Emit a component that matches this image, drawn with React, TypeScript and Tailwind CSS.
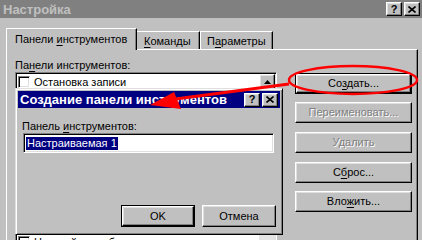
const raised =
  "border border-t-white border-l-white border-r-black border-b-black shadow-[inset_-1px_-1px_0_#808080,inset_1px_1px_0_#dfdfdf]";
const sunken =
  "border border-t-[#808080] border-l-[#808080] border-r-white border-b-white shadow-[inset_1px_1px_0_#000,inset_-1px_-1px_0_#dfdfdf]";

const U = ({ children }: { children: string }) => (
  <span className="underline underline-offset-[2px]">{children}</span>
);

const CaptionButtons = () => (
  <div className="flex gap-[2px]">
    <div
      className={`w-[16px] h-[14px] bg-[#c0c0c0] ${raised} flex items-center justify-center text-[11px] font-bold leading-none text-black`}
    >
      ?
    </div>
    <div
      className={`w-[16px] h-[14px] bg-[#c0c0c0] ${raised} flex items-center justify-center`}
    >
      <svg width="8" height="7" viewBox="0 0 8 7">
        <path d="M0.5 0.5 L7.5 6.5 M7.5 0.5 L0.5 6.5" stroke="black" strokeWidth="1.6" />
      </svg>
    </div>
  </div>
);

const SideButton = ({
  children,
  disabled,
  isDefault,
  className,
}: {
  children: React.ReactNode;
  disabled?: boolean;
  isDefault?: boolean;
  className?: string;
}) => (
  <div
    className={`h-[21px] w-[117px] ${isDefault ? "border border-black" : ""} ${className ?? ""}`}
  >
    <div
      className={`h-full w-full ${raised} flex items-center justify-center ${
        disabled ? "text-[#808080] [text-shadow:1px_1px_0_#fff]" : "text-black"
      }`}
    >
      <span>{children}</span>
    </div>
  </div>
);

const Row = ({ label }: { label: string }) => (
  <div className="h-[16px] flex items-center gap-[4px] pl-[1px] shrink-0">
    <div className={`w-[12px] h-[12px] bg-white ${sunken}`} />
    <span>{label}</span>
  </div>
);

export default function App() {
  return (
    <div className="relative w-[422px] h-[240px] overflow-hidden bg-[#c0c0c0] font-['Liberation_Sans',Arial,sans-serif] text-[11px] text-black">
      {/* title bar */}
      <div className="h-[18px] bg-[#808080] flex items-center justify-between pl-[3px] pr-[2px]">
        <span className="text-[13px] font-bold text-[#c0c0c0] leading-none">Настройка</span>
        <CaptionButtons />
      </div>

      <div className="pt-[10px] pl-[6px] pr-[4px]">
        {/* tabs */}
        <div className="flex items-end h-[21px]">
          <div className="relative z-10 h-[22px] -mb-[1px] w-[131px] bg-[#c0c0c0] border-t border-l border-white border-r border-r-black shadow-[inset_-1px_0_0_#808080] flex items-center pl-[8px] pb-[1px]">
            <span>
              Панели <U>и</U>нструментов
            </span>
          </div>
          <div className="h-[18px] w-[63px] border-t border-white border-r border-r-black shadow-[inset_-1px_0_0_#808080] flex items-center pl-[7px] pt-[2px]">
            <span>
              <U>К</U>оманды
            </span>
          </div>
          <div className="h-[18px] w-[73px] border-t border-l border-white border-r border-r-black shadow-[inset_-1px_0_0_#808080] flex items-center pl-[6px] pt-[2px]">
            <span>
              П<U>а</U>раметры
            </span>
          </div>
        </div>

        {/* panel */}
        <div className="h-[200px] border-t border-l border-white border-r border-r-black shadow-[inset_-1px_0_0_#808080] flex pl-[8px] gap-[18px]">
          <div className="pt-[8px] w-[262px]">
            <div className="h-[14px] leading-[14px]">
              Па<U>н</U>ели инструментов:
            </div>
            <div className={`h-[200px] bg-white ${sunken} p-[1px] flex`}>
              <div className="flex-1 flex flex-col">
                <Row label="Остановка записи" />
                {/* rows hidden behind the dialog */}
                <div className="h-[144px] shrink-0" />
                <Row label="Настройка изображения" />
              </div>
              <div className="w-[16px] flex flex-col bg-[#e4e4e4]">
                <div className={`h-[16px] bg-[#c0c0c0] ${raised} flex items-center justify-center`}>
                  <svg width="7" height="4" viewBox="0 0 7 4">
                    <path d="M3.5 0 L7 4 L0 4 Z" fill="black" />
                  </svg>
                </div>
              </div>
            </div>
          </div>

          <div className="pt-[23px] flex flex-col">
            <SideButton isDefault>
              Со<U>з</U>дать...
            </SideButton>
            <SideButton disabled className="mt-[8px]">
              Переименовать...
            </SideButton>
            <SideButton disabled className="mt-[9px]">
              Удалить
            </SideButton>
            <SideButton className="mt-[9px]">
              С<U>б</U>рос...
            </SideButton>
            <SideButton className="mt-[8px]">
              Вло<U>ж</U>ить...
            </SideButton>
          </div>
        </div>
      </div>

      {/* dialog: Создание панели инструментов */}
      <div className="absolute left-[15px] top-[88px] w-[268px] h-[147px] bg-[#c0c0c0] border border-t-[#dfdfdf] border-l-[#dfdfdf] border-r-black border-b-black shadow-[inset_1px_1px_0_#fff,inset_-1px_-1px_0_#808080] p-[2px]">
        <div className="h-[17px] bg-[#000080] flex items-center justify-between pl-[2px] pr-[2px]">
          <span className="text-[13px] font-bold text-white leading-none">Создание панели инструментов</span>
          <CaptionButtons />
        </div>
        <div className="pl-[4px] mt-[11px] h-[14px] leading-[14px]">
          Панель <U>и</U>нструментов:
        </div>
        <div className={`ml-[5px] w-[251px] h-[20px] bg-white ${sunken} flex items-center pl-[2px]`}>
          <span className="bg-[#000080] text-white leading-[13px] px-[1px]">Настраиваемая 1</span>
        </div>
        <div className="flex justify-end gap-[7px] pr-[4px] mt-[52px]">
          <div className="w-[74px] h-[22px] border border-black">
            <div className={`h-full w-full ${raised} flex items-center justify-center`}>OK</div>
          </div>
          <div className={`w-[74px] h-[22px] ${raised} flex items-center justify-center`}>Отмена</div>
        </div>
      </div>

      {/* red annotation */}
      <svg className="absolute inset-0 pointer-events-none" width="422" height="240" viewBox="0 0 422 240">
        <ellipse cx="353" cy="80" rx="64" ry="14" fill="none" stroke="#ff0000" strokeWidth="2.5" />
        <path d="M289 84 L168 100" stroke="#ff0000" strokeWidth="3" fill="none" />
        <path d="M150 105 L174 92 L181 109 Z" fill="#ff0000" />
      </svg>
    </div>
  );
}
